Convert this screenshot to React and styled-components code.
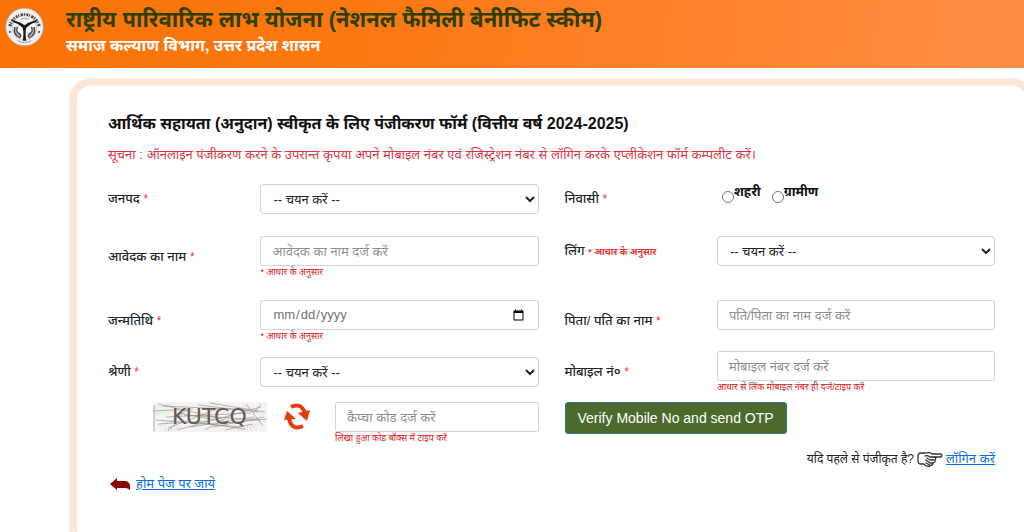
import React, { useState } from 'react';
import styled, { createGlobalStyle } from 'styled-components';

const GlobalStyle = createGlobalStyle`
  * { box-sizing: border-box; }
  body {
    margin: 0;
    background: #fff;
    color: #212529;
    font-family: "Liberation Sans", "Noto Sans", sans-serif;
    font-size: 13px;
    line-height: 20px;
    overflow-x: hidden;
  }
`;

const Header = styled.header`
  display: flex;
  align-items: flex-start;
  gap: 22px;
  height: 68px;
  padding: 7px 5px;
  background: linear-gradient(100deg, #f97306 0%, #fb7812 35%, #ff832f 70%, #ff8f45 100%);
`;

const Emblem = styled.svg`
  width: 39px;
  height: 40px;
  flex: none;
`;

const Title = styled.h1`
  margin: 0;
  color: #2f3f00;
  font-size: 22px;
  line-height: 26px;
  font-weight: 700;
`;

const Department = styled.h2`
  margin: 0;
  color: #fff;
  font-size: 16px;
  line-height: 26px;
  font-weight: 700;
`;

const Card = styled.main`
  margin: 11px -9px 0 70px;
  padding: 26px 31px 48px;
  border: 7px solid #fde6d3;
  border-radius: 20px;
  box-shadow: 0 0 2px #ddd;
`;

const FormTitle = styled.h3`
  margin: 0;
  color: #111;
  font-size: 16px;
  line-height: 24px;
  font-weight: 700;
`;

const Notice = styled.p`
  margin: 9px 0 19px;
  color: #dc3545;
  font-size: 13px;
  line-height: 20px;
`;

const Row = styled.div`
  display: grid;
  grid-template-columns: 5fr 11fr 5fr 11fr;
  column-gap: 26px;
  align-items: center;
  margin-bottom: ${(p) => p.$space || 0}px;
`;

const Cell = styled.div`
  display: flex;
  flex-direction: column;
  min-width: 0;
  align-self: ${(p) => (p.$top ? 'start' : 'center')};
`;

const Label = styled.label`
  font-size: 13px;
  line-height: 30px;
  font-weight: 500;
  white-space: nowrap;
  align-self: ${(p) => (p.$top ? 'start' : 'center')};
`;

const Star = styled.span`
  color: #e33;
  font-size: ${(p) => (p.$small ? 9 : 12)}px;
  font-weight: ${(p) => (p.$small ? 700 : 400)};
`;

const Hint = styled.small`
  color: #d8141c;
  font-size: 9px;
  line-height: 12px;
  white-space: nowrap;
`;

const Input = styled.input`
  width: 100%;
  height: 30px;
  padding: 0 11px;
  border: 1px solid #ced4da;
  border-radius: 3px;
  background: #fff;
  color: #6c757d;
  font: inherit;
  &::placeholder { color: #8f8f8f; opacity: 1; }
`;

const Select = styled.select`
  width: 100%;
  height: 30px;
  padding: 0 0 0 8px;
  border: 1px solid #ced4da;
  border-radius: 4px;
  background: #fff;
  color: #212529;
  font: inherit;
`;

const Radios = styled.div`
  display: flex;
  gap: 11px;
  padding-left: 5px;
`;

const RadioLabel = styled.label`
  display: flex;
  align-items: flex-start;
  height: 30px;
  color: #111;
  font-weight: 700;
  line-height: 16px;
  input {
    width: 12px;
    height: 12px;
    margin: 7px 0 0;
  }
`;

const CaptchaRow = styled.div`
  display: grid;
  grid-template-columns: 1fr 1fr;
  column-gap: 26px;
  align-items: start;
`;

const Captcha = styled.div`
  display: flex;
  align-items: flex-start;
  gap: 16px;
  padding-left: 45px;
`;

const CaptchaImage = styled.svg`
  width: 114px;
  height: 30px;
  flex: none;
`;

const CaptchaField = styled.div`
  display: flex;
  flex: 1;
  flex-direction: column;
  min-width: 0;
  margin-left: 8px;
`;

const RefreshButton = styled.button`
  width: 28px;
  height: 30px;
  padding: 0;
  border: 0;
  background: none;
  flex: none;
`;

const VerifyButton = styled.button`
  justify-self: start;
  height: 32px;
  padding: 0 12px;
  border: 1px solid #2b7f83;
  border-radius: 3px;
  background: #4d6a2d;
  color: #fff;
  font: inherit;
  font-size: 14px;
  white-space: nowrap;
`;

const LoginLine = styled.p`
  display: flex;
  justify-content: flex-end;
  align-items: center;
  gap: 3px;
  margin: 5px 0;
  font-size: 12px;
`;

const HomeLine = styled.p`
  display: flex;
  align-items: center;
  gap: 5px;
  margin: 0;
  padding-left: 2px;
`;

const Link = styled.a`
  color: #0b6fdb;
  font-size: 13px;
  text-decoration: underline;
`;

function Logo() {
  return (
    <Emblem viewBox="0 0 40 40" aria-hidden="true">
      <circle cx="20" cy="20" r="19.3" fill="#eeeeec" stroke="#b9a58e" strokeWidth="0.8" />
      <path d="M5 19 A15.5 15.5 0 0 1 35 19" fill="none" stroke="#444" strokeWidth="3.2" strokeDasharray="2 0.8 1 1.4 2.5 0.9 1.3 1.2" />
      <circle cx="20" cy="21" r="12.5" fill="#f5f5f3" stroke="#999" strokeWidth="0.5" />
      <path d="M8 15 Q14 16 18.3 21 Q19.3 26 18.3 34 H21.7 Q20.7 26 21.7 21 Q26 16 32 15 L31 13 Q24 15 20 18.3 Q16 15 9 13 Z" fill="#1c1c1c" />
      <path d="M10 20 Q8 28 15 31 Q18 29 13.5 26 Q11 24 13 20 M30 20 Q32 28 25 31 Q22 29 26.5 26 Q29 24 27 20" fill="#aaa" stroke="#444" strokeWidth="1.3" />
      <path d="M13 34 Q20 38 27 34" fill="none" stroke="#888" strokeWidth="0.8" />
      <path d="M16 12 Q20 10 24 12" fill="none" stroke="#888" strokeWidth="0.8" />
      <circle cx="5" cy="25" r="0.9" fill="#222" />
      <circle cx="35" cy="25" r="0.9" fill="#222" />
    </Emblem>
  );
}

function CaptchaPicture() {
  return (
    <CaptchaImage viewBox="0 0 114 30" role="img" aria-label="KUTCQ">
      <rect width="114" height="30" fill="#f3f3f1" />
      <path d="M2 5 L20 3 M3 12 L22 8 M5 24 L18 19 M12 28 L28 25 M90 4 L110 12 M97 26 L113 18 M85 28 L103 25" stroke="#ddd" strokeWidth="3" strokeDasharray="1 2" />
      <g fill="none" stroke="#8a8a8a" strokeWidth="0.6">
        <path d="M1 3 V29 M0 9 L40 7 M5 2 L70 17 M10 4 L95 8 M13 15 L98 11 M3 18 L88 25 M15 26 L64 7 M24 28 L108 5" />
        <path d="M31 13 L107 18 M37 25 L101 15 M45 3 L105 10 M57 1 L112 10 M64 22 L114 17 M93 2 L110 24 M100 12 L108 2 M18 20 L34 8" />
        <path d="M42 20 L92 27 M52 28 L82 11 M5 22 L55 19 M72 28 L100 22 M15 29 L22 22 M60 25 L111 15 M25 11 L80 21" />
      </g>
      <text x="19" y="22" fill="#6b574c" fontFamily="DejaVu Sans, sans-serif" fontSize="22">KUTCQ</text>
    </CaptchaImage>
  );
}

function RefreshIcon() {
  return (
    <svg width="28" height="30" viewBox="0 0 28 30" aria-hidden="true">
      <g fill="none" stroke="#e63b0d" strokeWidth="4">
        <path d="M8 5 Q18 0 22 11" />
        <path d="M20 24 Q9 29 6 17" />
      </g>
      <path d="M15 11 L27 8 L24 19 Z M1 18 L4 9 L13 17 Z" fill="#e63b0d" />
    </svg>
  );
}

function HandIcon() {
  return (
    <svg width="26" height="17" viewBox="0 0 26 17" aria-hidden="true">
      <g fill="#fff" stroke="#333" strokeWidth="1.3" strokeLinejoin="round" strokeLinecap="round">
        <path d="M4 2 H9 Q12 1 15 3 H24 Q26 4 24 6 H17 Q20 7 18 9 Q19 11 16 12 Q16 14 13 15 Q9 16 7 13 L4 13 Q1 13 1 10 V5 Q1 2 4 2 Z" />
        <path d="M17 6 H13 Q10 4 8 5 M17 9 H13 L10 7 M16 12 H13 L9 9 M13 14 L9 12" />
      </g>
    </svg>
  );
}

function BackIcon() {
  return (
    <svg width="21" height="13" viewBox="0 0 21 13" aria-hidden="true">
      <path d="M0 6 L7 0 V3 H16 Q21 4 20 12 Q18 10 15 10 H7 V12 Z" fill="#8b0000" />
    </svg>
  );
}

const App = () => {
  const [area, setArea] = useState('');
  return (
    <>
      <GlobalStyle />
      <Header>
        <Logo />
        <div>
          <Title>राष्ट्रीय पारिवारिक लाभ योजना (नेशनल फैमिली बेनीफिट स्कीम)</Title>
          <Department>समाज कल्याण विभाग, उत्तर प्रदेश शासन</Department>
        </div>
      </Header>
      <Card>
        <FormTitle>आर्थिक सहायता (अनुदान) स्वीकृत के लिए पंजीकरण फॉर्म (वित्तीय वर्ष 2024-2025)</FormTitle>
        <Notice>सूचना : ऑनलाइन पंजीकरण करने के उपरान्त कृपया अपने मोबाइल नंबर एवं रजिस्ट्रेशन नंबर से लॉगिन करके एप्लीकेशन फॉर्म कम्पलीट करें।</Notice>
        <form onSubmit={(e) => e.preventDefault()}>
          <Row $space={22}>
            <Label htmlFor="district">जनपद <Star>*</Star></Label>
            <Select id="district"><option>-- चयन करें --</option></Select>
            <Label as="span" id="resident">निवासी <Star>*</Star></Label>
            <Radios role="radiogroup" aria-labelledby="resident">
              <RadioLabel><input type="radio" name="area" checked={area === 'urban'} onChange={() => setArea('urban')} />शहरी</RadioLabel>
              <RadioLabel><input type="radio" name="area" checked={area === 'rural'} onChange={() => setArea('rural')} />ग्रामीण</RadioLabel>
            </Radios>
          </Row>
          <Row $space={22}>
            <Label htmlFor="name">आवेदक का नाम <Star>*</Star></Label>
            <Cell>
              <Input id="name" placeholder="आवेदक का नाम दर्ज करें" />
              <Hint>* आधार के अनुसार</Hint>
            </Cell>
            <Label $top htmlFor="gender">लिंग <Star $small>* आधार के अनुसार</Star></Label>
            <Cell $top>
              <Select id="gender"><option>-- चयन करें --</option></Select>
            </Cell>
          </Row>
          <Row $space={9}>
            <Label htmlFor="dob">जन्मतिथि <Star>*</Star></Label>
            <Cell>
              <Input id="dob" type="date" />
              <Hint>* आधार के अनुसार</Hint>
            </Cell>
            <Label htmlFor="father">पिता/ पति का नाम <Star>*</Star></Label>
            <Cell $top>
              <Input id="father" placeholder="पति/पिता का नाम दर्ज करें" />
            </Cell>
          </Row>
          <Row $space={9}>
            <Label htmlFor="category">श्रेणी <Star>*</Star></Label>
            <Select id="category"><option>-- चयन करें --</option></Select>
            <Label htmlFor="mobile">मोबाइल नं० <Star>*</Star></Label>
            <Cell>
              <Input id="mobile" placeholder="मोबाइल नंबर दर्ज करें" />
              <Hint>आधार से लिंक मोबाइल नंबर ही दर्ज/टाइप करें</Hint>
            </Cell>
          </Row>
          <CaptchaRow>
            <Captcha>
              <CaptchaPicture />
              <RefreshButton type="button" aria-label="Refresh"><RefreshIcon /></RefreshButton>
              <CaptchaField>
                <Input id="captcha" aria-label="कैप्चा कोड" placeholder="कैप्चा कोड दर्ज करें" />
                <Hint>लिखा हुआ कोड बॉक्स में टाइप करें</Hint>
              </CaptchaField>
            </Captcha>
            <VerifyButton type="button">Verify Mobile No and send OTP</VerifyButton>
          </CaptchaRow>
        </form>
        <LoginLine>यदि पहले से पंजीकृत है? <HandIcon /> <Link href="#login">लॉगिन करें</Link></LoginLine>
        <HomeLine><BackIcon /> <Link href="#home">होम पेज पर जाये</Link></HomeLine>
      </Card>
    </>
  );
};

export default App;
